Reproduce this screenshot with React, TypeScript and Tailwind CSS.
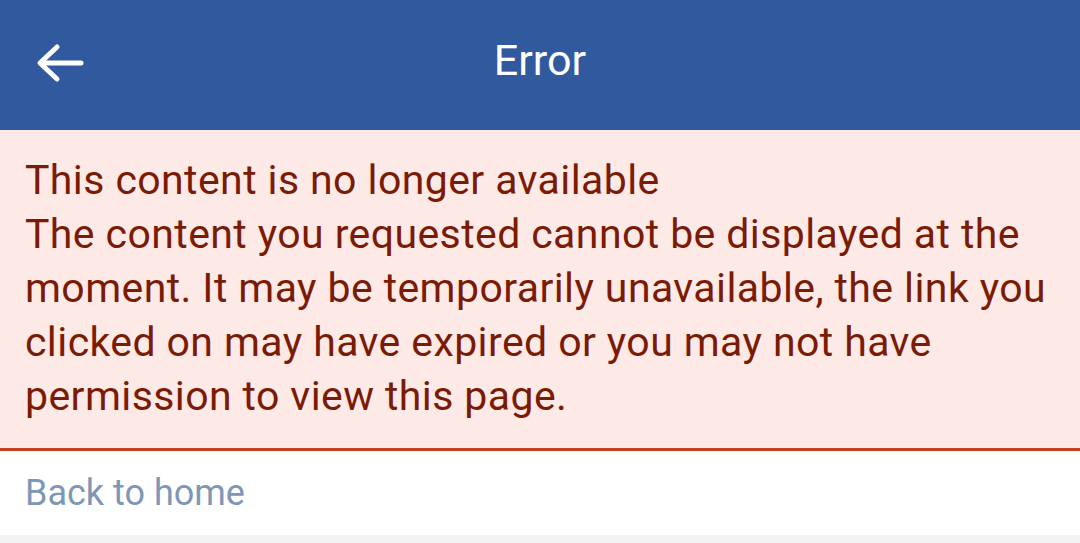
import React from 'react';

export default function App() {
  return (
    <div className="w-[1080px] h-[543px] bg-[#f2f3f5] overflow-hidden" style={{ fontFamily: 'Roboto, "Noto Sans", sans-serif' }}>
      {/* Top bar */}
      <header className="relative h-[130px] bg-[#315a9e] flex items-center justify-center">
        <button className="absolute left-[34px] top-[40px] w-[52px] h-[46px] flex items-center justify-center text-white">
          <svg width="50" height="42" viewBox="0 0 50 42" fill="none" stroke="currentColor" strokeWidth="5" strokeLinecap="round" strokeLinejoin="round">
            <path d="M46 21 H6" />
            <path d="M22 5 L5 21 L22 37" />
          </svg>
        </button>
        <h1 className="text-white text-[43px] leading-none pb-[10px]">Error</h1>
      </header>

      {/* Error notice */}
      <section className="bg-[#fde9e6] border-b-[3px] border-[#c5401f] px-[25px] pt-[23px] pb-[25px] text-[#7a1b06] text-[41px] leading-[54px] tracking-[0.01em]">
        <p>This content is no longer available</p>
        <p>
          The content you requested cannot be displayed at the moment. It may be temporarily unavailable, the link you
          clicked on may have expired or you may not have permission to view this page.
        </p>
      </section>

      {/* Link */}
      <div className="h-[84px] bg-white flex items-center px-[25px]">
        <a className="text-[#7f97b6] text-[36px] leading-none">Back to home</a>
      </div>
    </div>
  );
}
